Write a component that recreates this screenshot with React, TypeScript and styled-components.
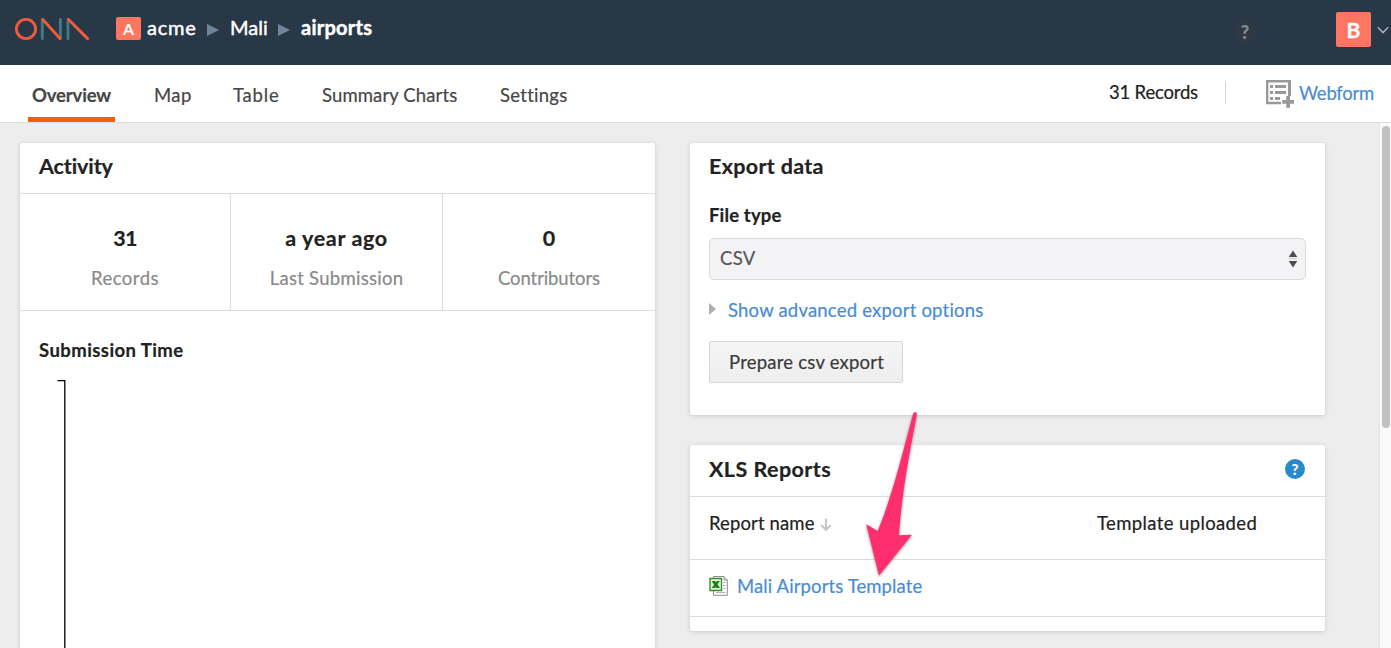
import React from "react";
import styled, { createGlobalStyle } from "styled-components";

const GlobalStyle = createGlobalStyle`
  *, *::before, *::after { box-sizing: border-box; }
  html, body { margin: 0; height: 100%; overflow: hidden; }
  body {
    background: #ededed;
    color: #222;
    font-family: Lato, "Open Sans", sans-serif;
    font-size: 18.5px;
    line-height: 24px;
  }
`;

const Page = styled.div`
  position: relative;
  height: 648px;
  display: flex;
  flex-direction: column;
  overflow: hidden;
`;

const Text = styled.span<{ $track?: number }>`
  letter-spacing: ${(p) => p.$track ?? 0.2}px;
  white-space: nowrap;
  -webkit-text-stroke: 0.2px currentColor;
`;

/* Header */
const Header = styled.header`
  height: 65px;
  flex: none;
  display: flex;
  align-items: flex-start;
  background: #293847;
  color: #fff;
`;

const Logo = styled.svg`
  margin: 17px 0 0 14px;
  flex: none;
`;

const Crumbs = styled.nav`
  display: flex;
  align-items: center;
  height: 24px;
  margin: 16px 0 0 26px;
  font-size: 20px;
`;

const OrgBadge = styled.span`
  width: 25px;
  height: 23px;
  margin-right: 6px;
  border-radius: 2px;
  background: #ff7560;
  font-size: 16px;
  font-weight: 700;
  line-height: 24px;
  text-align: center;
`;

const CrumbText = styled(Text)<{ $width: number; $bold?: boolean }>`
  width: ${(p) => p.$width}px;
  margin-top: -2px;
  font-weight: ${(p) => (p.$bold ? 700 : 400)};
  -webkit-text-stroke: 0.45px #fff;
`;

const CrumbArrow = styled.span`
  margin: 3px 11px 0 11px;
  border-left: 12px solid #70859b;
  border-top: 6.5px solid transparent;
  border-bottom: 6.5px solid transparent;
`;

const HelpBubble = styled.span`
  position: relative;
  width: 24px;
  height: 24px;
  margin: 20px 0 0 auto;
  border-radius: 50%;
  background: #2d3945;
  color: #858b92;
  font: 900 19px/23px Lato, sans-serif;
  text-align: center;
`;

const Avatar = styled.span`
  width: 35px;
  height: 35px;
  margin: 12px 0 0 79px;
  border-radius: 2px;
  background: #ff7560;
  font: 700 21px/36px Lato, sans-serif;
  -webkit-text-stroke: 0.3px #fff;
  text-align: center;
`;

const Caret = styled.svg`
  margin: 26px 2px 0 6px;
`;

/* Tab bar */
const TabBar = styled.div`
  height: 58px;
  flex: none;
  display: flex;
  background: #fff;
  border-bottom: 1px solid #dcdcdc;
  color: #464646;
`;

const Tabs = styled.div`
  display: flex;
  padding-left: 28px;
  gap: 35px;
`;

const Tab = styled.a<{ $width: number; $active?: boolean }>`
  width: ${(p) => p.$width}px;
  height: 57px;
  padding-left: 4px;
  line-height: 60px;
  font-weight: ${(p) => (p.$active ? 700 : 400)};
  border-bottom: 5px solid ${(p) => (p.$active ? "#ff5e00" : "transparent")};
`;

const TabTools = styled.div`
  display: flex;
  align-items: flex-start;
  margin-left: auto;
  padding-right: 17px;
`;

const RecordCount = styled.span`
  width: 117px;
  height: 22px;
  margin-top: 17px;
  border-right: 1px solid #d4d4d4;
  color: #222;
  line-height: 20px;
`;

const WebformIcon = styled.svg`
  margin: 14px 5px 0 39px;
`;

const WebformLink = styled.a`
  width: 75px;
  margin-top: 16px;
  color: #4a8cd3;
`;

/* Content */
const Body = styled.div`
  flex: 1;
  min-height: 0;
  display: flex;
`;

const Content = styled.main`
  flex: 1;
  display: flex;
  align-items: flex-start;
  gap: 35px;
  padding: 20px 0 0 20px;
`;

const Column = styled.section`
  width: 635px;
  flex: none;
  display: flex;
  flex-direction: column;
  gap: 30px;
`;

const Card = styled.article<{ $height: number }>`
  height: ${(p) => p.$height}px;
  border-radius: 2px;
  background: #fff;
  box-shadow: 0 0 1px rgba(0, 0, 0, 0.15), 0 1px 5px rgba(0, 0, 0, 0.13);
`;

const CardHead = styled.div<{ $height: number; $line: number; $ruled?: boolean }>`
  height: ${(p) => p.$height}px;
  display: flex;
  justify-content: space-between;
  padding: 0 20px 0 19px;
  border-bottom: ${(p) => (p.$ruled ? "1px solid #dcdcdc" : "none")};
  line-height: ${(p) => p.$line}px;
`;

const CardTitle = styled.h2`
  margin: 0;
  font-size: 21.5px;
  font-weight: 700;
`;

const Stats = styled.div`
  display: grid;
  grid-template-columns: 211px 212px 212px;
  height: 117px;
  border-bottom: 1px solid #dcdcdc;
`;

const Stat = styled.div`
  display: flex;
  flex-direction: column;
  align-items: center;
  gap: 16px;
  padding-top: 32px;
  border-right: 1px solid #dcdcdc;
  &:last-child { border-right: none; }
`;

const StatValue = styled(Text)`
  font-size: 21.5px;
  font-weight: 700;
`;

const StatLabel = styled(Text)`
  color: #8a8a8a;
`;

const Label = styled.h3<{ $top: number }>`
  margin: 0;
  padding: ${(p) => p.$top}px 0 0 19px;
  font-size: 18.5px;
  font-weight: 700;
`;

const Axis = styled.svg`
  display: block;
  margin: 18px 0 0 37px;
`;

const FormBody = styled.div`
  display: flex;
  flex-direction: column;
  align-items: flex-start;
  padding: 0 19px;
`;

const Select = styled.div`
  width: 597px;
  height: 42px;
  margin-top: 11px;
  display: flex;
  justify-content: space-between;
  padding: 0 7px 0 10px;
  border: 1px solid #dadada;
  border-radius: 5px;
  background: #f3f3f5;
  color: #555;
  line-height: 39px;
`;

const SelectArrows = styled.svg`
  margin-top: 11px;
`;

const Disclosure = styled.a`
  display: flex;
  align-items: center;
  gap: 12px;
  height: 24px;
  margin-top: 18px;
  color: #4a8cd3;
  &::before {
    content: "";
    margin-top: -3px;
    border-left: 7px solid #b0b0b0;
    border-top: 6px solid transparent;
    border-bottom: 6px solid transparent;
  }
`;

const Button = styled.button`
  width: 194px;
  height: 42px;
  margin: 19px 0 0;
  padding: 0 0 0 19px;
  border: 1px solid #d6d6d6;
  border-radius: 2px;
  background: linear-gradient(#f5f5f5, #eee);
  color: #3a3a3a;
  font: 18.5px/36px Lato, sans-serif;
  text-align: left;
`;

const HelpDot = styled.span`
  width: 20px;
  height: 20px;
  margin-top: 14px;
  border-radius: 50%;
  background: #268acd;
  color: #fff;
  font: 900 15px/20px Lato, sans-serif;
  text-align: center;
`;

const TableRow = styled.div<{ $height: number; $line: number }>`
  height: ${(p) => p.$height}px;
  display: grid;
  grid-template-columns: 388px 1fr;
  padding-left: 19px;
  border-bottom: 1px solid #dcdcdc;
  line-height: ${(p) => p.$line}px;
`;

const Cell = styled.div`
  display: flex;
  align-items: flex-start;
`;

const SortArrow = styled.svg`
  margin: 21px 0 0 5px;
`;

const SheetIcon = styled.svg`
  margin: 15px 9px 0 0;
`;

const ReportLink = styled.a`
  color: #4a8cd3;
`;

const ScrollTrack = styled.div`
  width: 12px;
  padding: 3px 0 0 2px;
  background: #fafafa;
  border-left: 1px solid #e6e6e6;
`;

const ScrollThumb = styled.div`
  width: 8px;
  height: 302px;
  border-radius: 4px;
  background: #c1c1c1;
`;

const Pointer = styled.svg`
  position: absolute;
  left: 856px;
  top: 406px;
  filter: drop-shadow(0 1px 1.5px rgba(0, 0, 0, 0.45));
`;

export default function App() {
  return (
    <Page>
      <GlobalStyle />
      <Header>
        <Logo width="76" height="24" viewBox="0 0 76 24" fill="none" strokeWidth="2.9" strokeLinecap="round">
          <g stroke="#3f7a86">
            <path d="M28.3 2.5V21.7M46.4 2.5V21.7M54 2.5V21.7" />
          </g>
          <g stroke="#f4593b">
            <circle cx="12" cy="12" r="9.6" />
            <path d="M28.8 2.5L46 21.4M54.5 2.5L73.6 21.6" />
          </g>
        </Logo>
        <Crumbs>
          <OrgBadge>A</OrgBadge>
          <CrumbText $width={49} $track={0.8}>acme</CrumbText>
          <CrumbArrow />
          <CrumbText $width={37} $track={0}>Mali</CrumbText>
          <CrumbArrow />
          <CrumbText $width={74} $track={0.25} $bold>airports</CrumbText>
        </Crumbs>
        <HelpBubble>?</HelpBubble>
        <Avatar>B</Avatar>
        <Caret width="12" height="9" viewBox="0 0 12 9" fill="none" stroke="#a9b0b8" strokeWidth="1.5">
          <path d="M0.8 1.2L6 6.6L11.2 1.2" />
        </Caret>
      </Header>

      <TabBar>
        <Tabs>
          <Tab $width={87} $active><Text $track={-0.15}>Overview</Text></Tab>
          <Tab $width={44}><Text $track={0.4}>Map</Text></Tab>
          <Tab $width={54}><Text $track={0.8}>Table</Text></Tab>
          <Tab $width={143}><Text $track={0.12}>Summary Charts</Text></Tab>
          <Tab $width={75}><Text $track={0.27}>Settings</Text></Tab>
        </Tabs>
        <TabTools>
          <RecordCount><Text $track={-0.2}>31 Records</Text></RecordCount>
          <WebformIcon width="29" height="29" viewBox="0 0 29 29" fill="#999">
            <path d="M1 1H26V17H23V3.4H3.4V22.8H16V25.2H1Z" />
            <path d="M5 6h3v3H5zM10 6h11v3H10zM5 12h3v3H5zM10 12h11v3H10zM5 18h3v3H5zM10 18h5v3h-5z" />
            <path d="M21.2 17h3.8v4h4v3.8h-4v4h-3.8v-4h-4V21h4z" />
          </WebformIcon>
          <WebformLink><Text $track={-0.25}>Webform</Text></WebformLink>
        </TabTools>
      </TabBar>

      <Body>
        <Content>
          <Column>
            <Card $height={600}>
              <CardHead $height={51} $line={47} $ruled>
                <CardTitle><Text $track={-0.1}>Activity</Text></CardTitle>
              </CardHead>
              <Stats>
                <Stat>
                  <StatValue $track={-0.8}>31</StatValue>
                  <StatLabel $track={0.5}>Records</StatLabel>
                </Stat>
                <Stat>
                  <StatValue $track={0.65}>a year ago</StatValue>
                  <StatLabel $track={0.28}>Last Submission</StatLabel>
                </Stat>
                <Stat>
                  <StatValue $track={0}>0</StatValue>
                  <StatLabel $track={-0.1}>Contributors</StatLabel>
                </Stat>
              </Stats>
              <Label $top={27}><Text $track={0.43}>Submission Time</Text></Label>
              <Axis width="10" height="270" viewBox="0 0 10 270" fill="none" stroke="#000" strokeWidth="1.3">
                <path d="M0.5 0.7H7.8V270" />
              </Axis>
            </Card>
          </Column>

          <Column>
            <Card $height={272}>
              <CardHead $height={47} $line={47}>
                <CardTitle><Text $track={0.32}>Export data</Text></CardTitle>
              </CardHead>
              <Label $top={13}><Text $track={0.15}>File type</Text></Label>
              <FormBody>
                <Select>
                  <Text $track={0.3}>CSV</Text>
                  <SelectArrows width="10" height="18" viewBox="0 0 10 18">
                    <path d="M5 0.5L9.3 7H0.7Z" fill="#4d4d4d" />
                    <path d="M5 17.5L9.3 11H0.7Z" fill="#4d4d4d" />
                    <path d="M0.7 8h8.6v1.2H0.7z" fill="#d0d0d2" />
                  </SelectArrows>
                </Select>
                <Disclosure><Text $track={0.2}>Show advanced export options</Text></Disclosure>
                <Button><Text $track={0.22}>Prepare csv export</Text></Button>
              </FormBody>
            </Card>

            <Card $height={186}>
              <CardHead $height={52} $line={49} $ruled>
                <CardTitle><Text $track={0.45}>XLS Reports</Text></CardTitle>
                <HelpDot>?</HelpDot>
              </CardHead>
              <TableRow $height={63} $line={53}>
                <Cell>
                  <Text $track={0.12}>Report name</Text>
                  <SortArrow width="12" height="14" viewBox="0 0 12 14" fill="none" stroke="#c6c6c6" strokeWidth="2.2">
                    <path d="M6 0.5V11.5M1.3 7.2L6 11.7L10.7 7.2" />
                  </SortArrow>
                </Cell>
                <Cell><Text $track={0.38}>Template uploaded</Text></Cell>
              </TableRow>
              <TableRow $height={57} $line={53}>
                <Cell>
                  <SheetIcon width="19" height="21" viewBox="0 0 19 21">
                    <path d="M4.5 1.5H15L18.3 5V20.3H4.5Z" fill="#fff" stroke="#8c8c8c" />
                    <path d="M15 1.5V5H18.3" fill="#ddd" stroke="#8c8c8c" />
                    <path d="M14 7.5h2.5M14 10.5h2.5M14 13.5h2.5M7 17.5h9.5" stroke="#b5b5b5" />
                    <path d="M1 3.5H12.5V15.5H1Z" fill="#e4f3df" stroke="#3c8a33" strokeWidth="1.4" />
                    <path d="M2.6 6H6.2L11 13H7.2Z" fill="#188514" />
                    <path d="M11 6H8L2.6 13H5.8Z" fill="#188514" />
                  </SheetIcon>
                  <ReportLink><Text $track={0.11}>Mali Airports Template</Text></ReportLink>
                </Cell>
              </TableRow>
            </Card>
          </Column>
        </Content>
        <ScrollTrack><ScrollThumb /></ScrollTrack>
      </Body>

      <Pointer width="70" height="180" viewBox="856 406 70 180" fill="#ff2e6e">
        <path d="M913.2 413.5C914 411.5 917.2 412 916.8 414.5C910 451 902 490 899 535.3L911.9 534.7L879 575.6L866.2 524.2L877.7 531C892 497 902 455 913.2 413.5Z" />
      </Pointer>
    </Page>
  );
}
